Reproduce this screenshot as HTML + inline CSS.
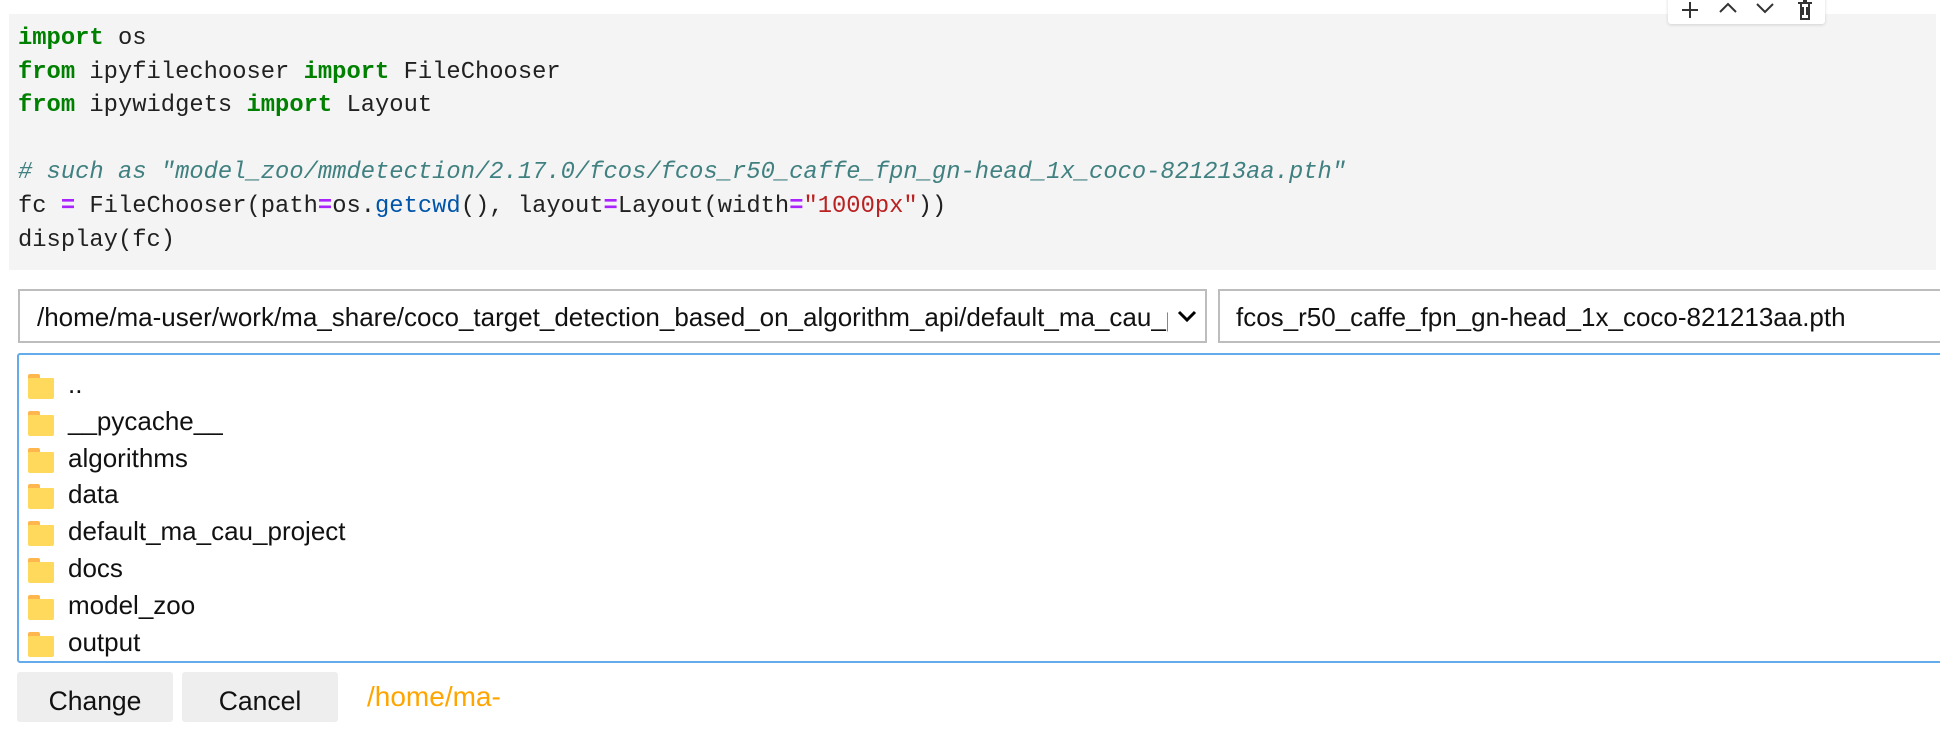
<!DOCTYPE html>
<html><head><meta charset="utf-8"><style>
body{margin:0;width:1940px;height:715px;overflow:hidden;background:#fff;position:relative;font-family:"Liberation Sans",Arial,sans-serif}
.code{position:absolute;left:9px;top:14px;width:1927px;height:256px;background:#f4f4f4}
.code pre{margin:0;position:absolute;left:9px;top:8px;font-family:"Liberation Mono",monospace;font-size:23.8px;line-height:33.6px;color:#212121}
.k{color:#008000;font-weight:bold}.o{color:#aa22ff;font-weight:bold}.c{color:#408080;font-style:italic}.s{color:#ba2121}.f{color:#0055aa}
.tb{position:absolute;left:1668px;top:-6px;width:157px;height:30px;background:#fff;border-radius:3px;box-shadow:0 1px 3px rgba(0,0,0,.15)}
.sel{position:absolute;left:18px;top:289px;width:1189px;height:54px;border:2px solid #bdbdbd;box-sizing:border-box}
.sel span{position:absolute;left:17px;top:11px;font-size:26px;color:#111;white-space:nowrap;width:1131px;overflow:hidden}
.inp{position:absolute;left:1218px;top:289px;width:730px;height:54px;border:2px solid #bdbdbd;box-sizing:border-box}
.inp span{position:absolute;left:16px;top:11px;font-size:26px;color:#111}
.list{position:absolute;left:17px;top:353px;width:1930px;height:310px;border:2px solid #64abec;border-radius:3px;box-sizing:border-box}
.it{position:absolute;left:9px;height:30px;font-size:26px;color:#111;line-height:30px}
.it i{position:absolute;left:0;top:2px;width:26px;height:25px}
.it b{position:absolute;left:0;top:0;width:12px;height:5px;background:#ffb74d;border-radius:2px 2px 0 0}
.it em{position:absolute;left:0;top:4px;width:26px;height:21px;background:#ffd95b;border-radius:1px 1px 2px 2px}
.it span{position:absolute;left:40px;top:-3px;white-space:nowrap}
.btn{position:absolute;top:672px;width:156px;height:50px;background:#eee;border-radius:3px;font-size:26.5px;color:#111;text-align:center;line-height:58px}
</style></head><body>
<div class="code"><pre><span class="k">import</span> os
<span class="k">from</span> ipyfilechooser <span class="k">import</span> FileChooser
<span class="k">from</span> ipywidgets <span class="k">import</span> Layout

<span class="c"># such as "model_zoo/mmdetection/2.17.0/fcos/fcos_r50_caffe_fpn_gn-head_1x_coco-821213aa.pth"</span>
fc <span class="o">=</span> FileChooser(path<span class="o">=</span>os.<span class="f">getcwd</span>(), layout<span class="o">=</span>Layout(width<span class="o">=</span><span class="s">"1000px"</span>))
display(fc)</pre></div>
<div class="tb"><svg width="157" height="30" viewBox="0 0 157 30" fill="none" stroke="#333" stroke-width="2">
<path d="M22 8V24M14 16H30"/><path d="M52 18L60 10L68 18"/><path d="M89 10L97 18L105 10"/><path d="M130 9H144M133 9V25H141V9M135 13V21M139 13V21M135 7H139"/></svg></div>
<div class="sel"><span>/home/ma-user/work/ma_share/coco_target_detection_based_on_algorithm_api/default_ma_cau_project</span>
<svg style="position:absolute;right:8px;top:18px" width="20" height="14" viewBox="0 0 20 14"><path d="M2 3L10 11L18 3" stroke="#000" stroke-width="3" fill="none"/></svg></div>
<div class="inp"><span>fcos_r50_caffe_fpn_gn-head_1x_coco-821213aa.pth</span></div>
<div class="list">
<div class="it" style="top:17px"><i><b></b><em></em></i><span>..</span></div>
<div class="it" style="top:54px"><i><b></b><em></em></i><span>__pycache__</span></div>
<div class="it" style="top:91px"><i><b></b><em></em></i><span>algorithms</span></div>
<div class="it" style="top:127px"><i><b></b><em></em></i><span>data</span></div>
<div class="it" style="top:164px"><i><b></b><em></em></i><span>default_ma_cau_project</span></div>
<div class="it" style="top:201px"><i><b></b><em></em></i><span>docs</span></div>
<div class="it" style="top:238px"><i><b></b><em></em></i><span>model_zoo</span></div>
<div class="it" style="top:275px"><i><b></b><em></em></i><span>output</span></div>
</div>
<div class="btn" style="left:17px">Change</div>
<div class="btn" style="left:182px">Cancel</div>
<div style="position:absolute;left:367px;top:681px;font-size:28px;color:#ffa500">/home/ma-</div>
</body></html>
